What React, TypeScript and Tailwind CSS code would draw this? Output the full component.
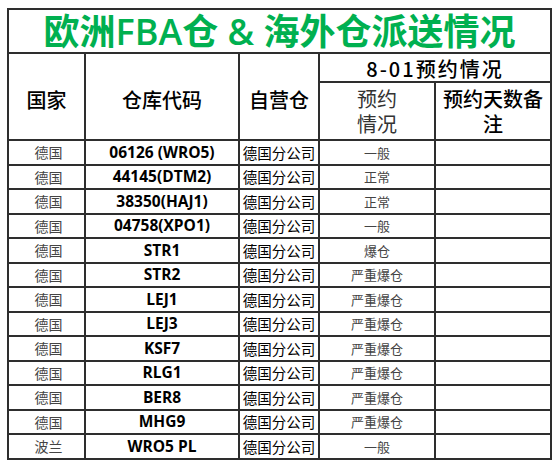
import React from "react";

const rows: [string, string, string, string][] = [
  ["德国", "06126 (WRO5)", "德国分公司", "一般"],
  ["德国", "44145(DTM2)", "德国分公司", "正常"],
  ["德国", "38350(HAJ1)", "德国分公司", "正常"],
  ["德国", "04758(XPO1)", "德国分公司", "一般"],
  ["德国", "STR1", "德国分公司", "爆仓"],
  ["德国", "STR2", "德国分公司", "严重爆仓"],
  ["德国", "LEJ1", "德国分公司", "严重爆仓"],
  ["德国", "LEJ3", "德国分公司", "严重爆仓"],
  ["德国", "KSF7", "德国分公司", "严重爆仓"],
  ["德国", "RLG1", "德国分公司", "严重爆仓"],
  ["德国", "BER8", "德国分公司", "严重爆仓"],
  ["德国", "MHG9", "德国分公司", "严重爆仓"],
  ["波兰", "WRO5 PL", "德国分公司", "一般"],
];

const cell = "flex items-center justify-center border-r-2 border-b-2 border-[#2e2e2e] text-center";

export default function App() {
  return (
    <div className="h-[468px] w-[560px] bg-white pl-[7px] pt-[8px] font-['Noto_Sans_CJK_SC',sans-serif] text-black">
      <div className="grid w-fit grid-cols-[77px_154px_80px_116px_116px] grid-rows-[44px_29px_58px_25px_24px_25px_24px_25px_24px_25px_24px_25px_24px_25px_24px_25px] border-l-2 border-t-2 border-[#2e2e2e]">
        <div className={`${cell} col-span-5 pt-[2px] font-['Open_Sans','Noto_Sans_CJK_SC',sans-serif] text-[36px] font-semibold leading-none text-[#00b050]`}>
          欧洲FBA仓 &amp; 海外仓派送情况
        </div>

        <div className={`${cell} row-span-2 pt-[6px] text-[20px] font-medium`}>国家</div>
        <div className={`${cell} row-span-2 pt-[6px] text-[20px] font-medium`}>仓库代码</div>
        <div className={`${cell} row-span-2 pt-[6px] text-[20px] font-medium`}>自营仓</div>
        <div className={`${cell} col-span-2 pt-[2px] text-[20px] font-medium leading-none tracking-[2px]`}>8-01预约情况</div>
        <div className="flex flex-col items-center justify-center border-r-2 border-b-2 border-[#2e2e2e] text-[20px] font-normal leading-[25px] text-[#333]">
          <span>预约</span>
          <span>情况</span>
        </div>
        <div className="flex flex-col items-center justify-center border-r-2 border-b-2 border-[#2e2e2e] text-[20px] font-medium leading-[25px]">
          <span>预约天数备</span>
          <span>注</span>
        </div>

        {rows.map(([country, code, owner, status], i) => (
          <React.Fragment key={i}>
            <div className={`${cell} pl-[4px] text-[14px] font-normal text-[#444]`}>{country}</div>
            <div className={`${cell} font-['Open_Sans',sans-serif] text-[15.5px] font-bold`}>{code}</div>
            <div className={`${cell} text-[14.5px]`}>{owner}</div>
            <div className={`${cell} text-[13px] font-normal text-[#444]`}>{status}</div>
            <div className={cell} />
          </React.Fragment>
        ))}
      </div>
    </div>
  );
}
